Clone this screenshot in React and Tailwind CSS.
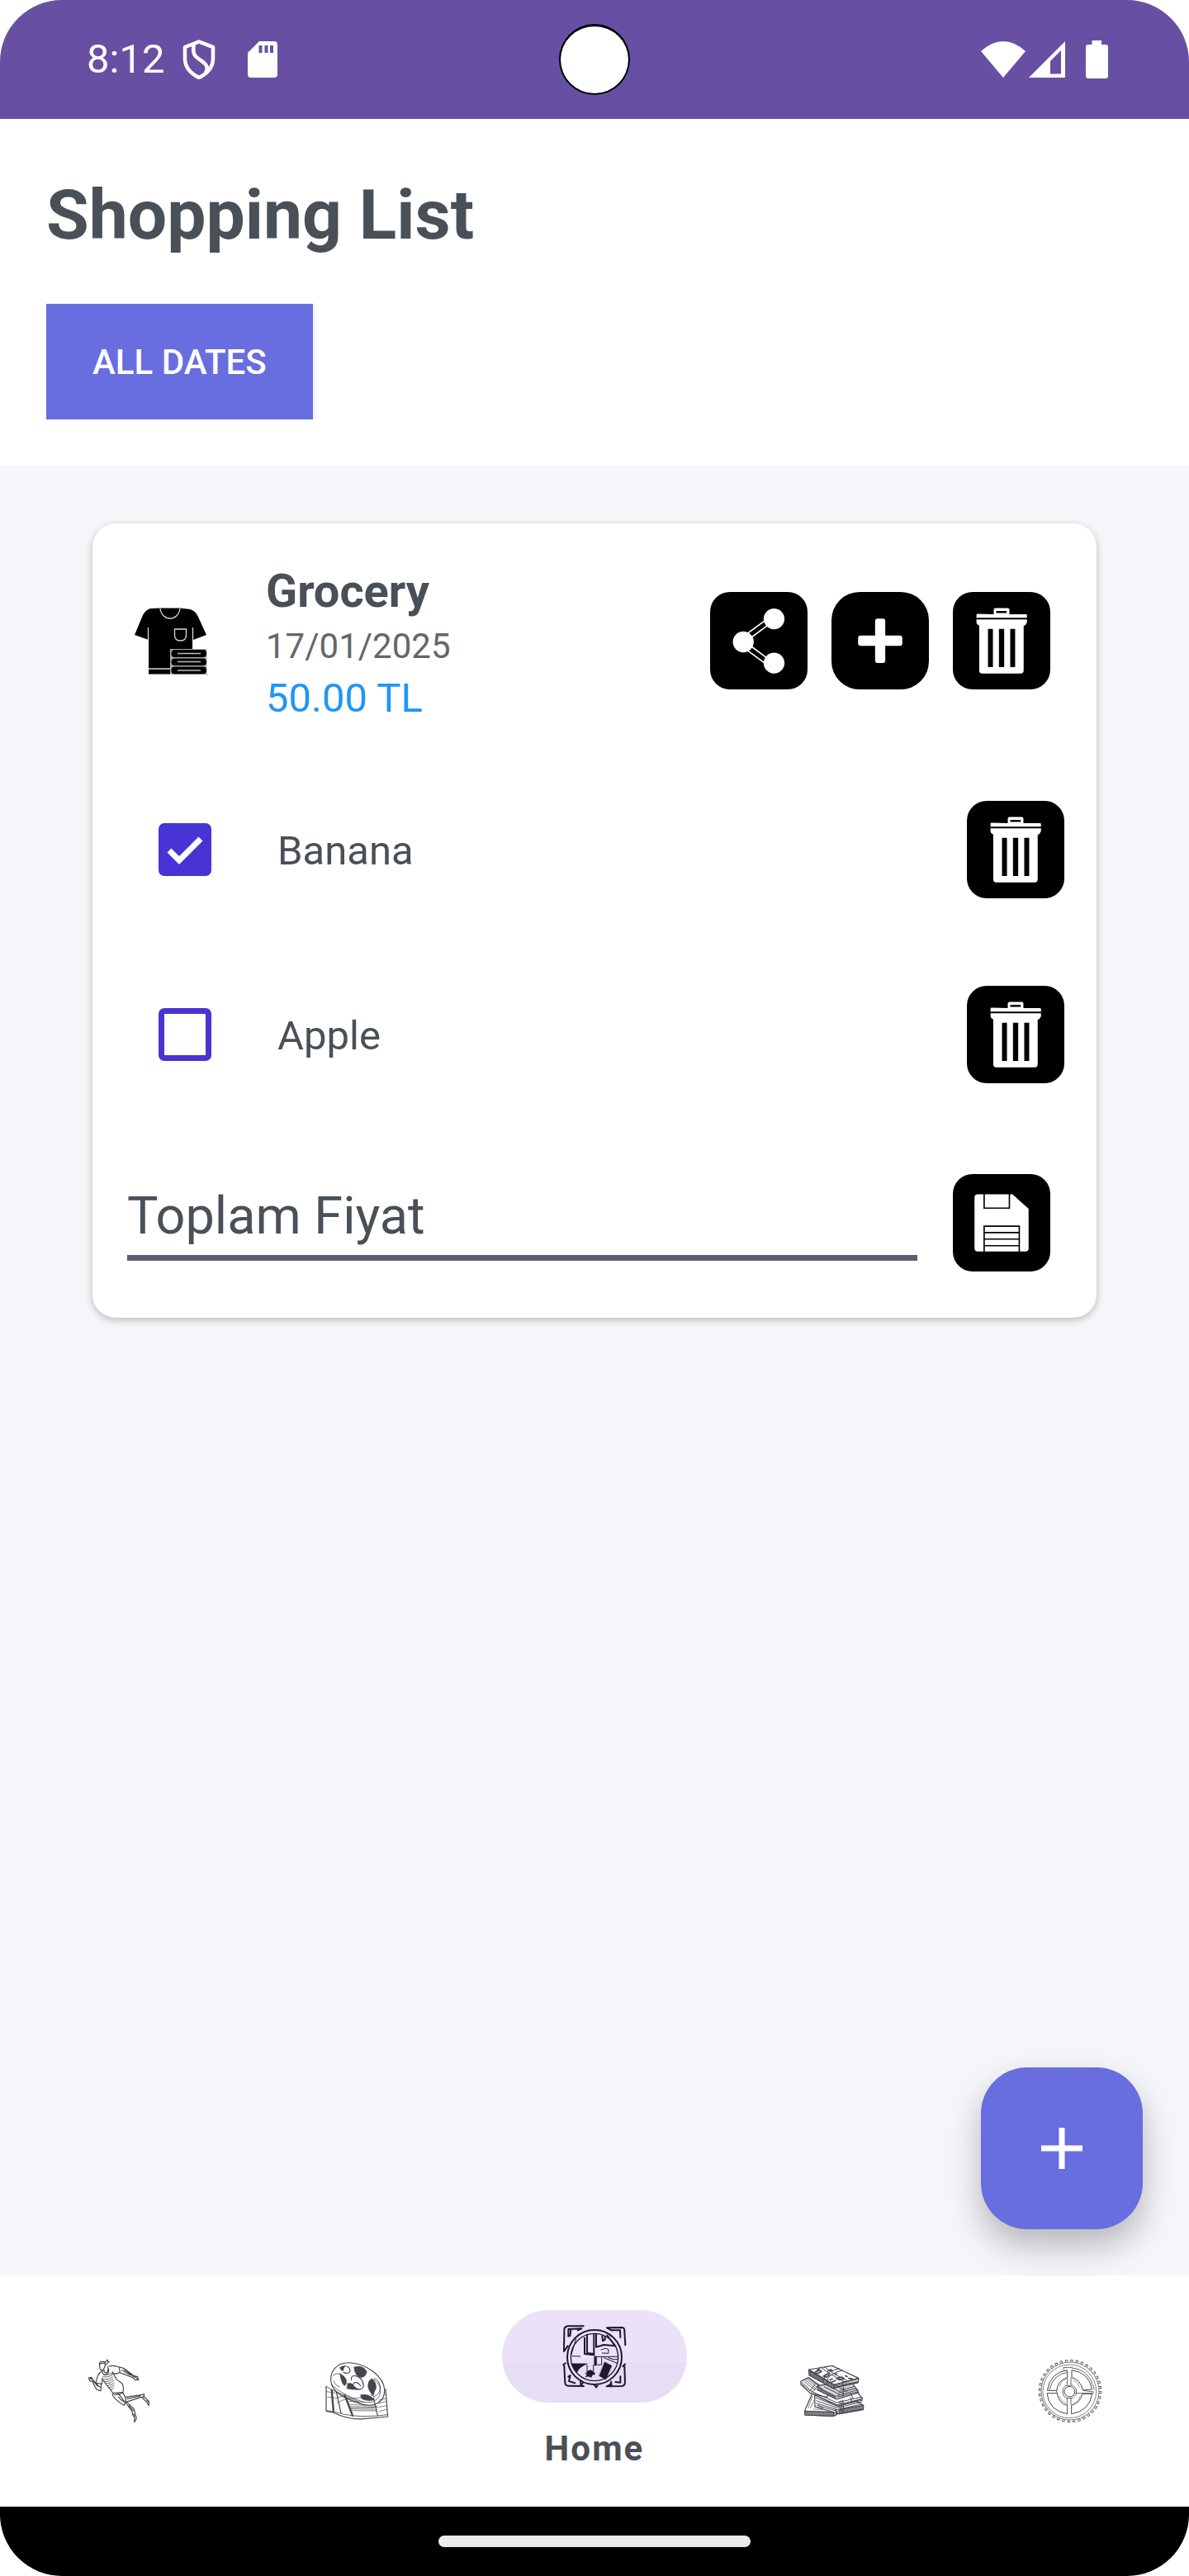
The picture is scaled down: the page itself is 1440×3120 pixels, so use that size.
import { useState } from "react";

function StatusBar() {
  return (
    <header className="relative flex h-36 items-center justify-between bg-[#6750a3] pl-[105px] pr-[98px] text-white">
      <div className="flex items-center">
        <span className="text-[49px] leading-[58px]">8:12</span>
        <svg className="ml-[22px] h-12 w-10" viewBox="0 0 40 48" fill="none" stroke="#fff" strokeWidth="4.5" strokeLinejoin="round">
          <path d="M20 2.5 37 9v14c0 10-7 18-17 23C10 41 3 33 3 23V9z" />
          <path d="M14 5c-4 18 7 17 14 25 3 4 2 7 0 10" />
        </svg>
        <svg className="ml-[39px] h-11 w-9" viewBox="0 0 36 44">
          <path fill="#fff" d="M14 0h18a4 4 0 0 1 4 4v36a4 4 0 0 1-4 4H4a4 4 0 0 1-4-4V14z" />
          <path fill="#6750a3" d="M13.500 5h4v9h-4zM20.500 5h4v9h-4zM27 5h4v9h-4z" />
        </svg>
      </div>
      <div className="absolute left-1/2 top-[29px] size-[86px] -translate-x-1/2 rounded-full border-x-2 border-b-2 border-t-[3px] border-black bg-white" />
      <div className="flex items-center">
        <svg className="h-11 w-[54px]" viewBox="0 0 54 44">
          <path fill="#fff" d="M0 12Q27-12 54 12L27 44z" />
        </svg>
        <svg className="ml-1 h-11 w-11" viewBox="0 0 44 44">
          <path fill="#fff" fillRule="evenodd" d="M44 0v44H0zM26 24v15.500h13V11z" />
        </svg>
        <svg className="ml-[25px] h-[46px] w-[27px]" viewBox="0 0 27 46">
          <path fill="#fff" d="M7.500 0h11.500v5h5a3 3 0 0 1 3 3v35a3 3 0 0 1-3 3H3a3 3 0 0 1-3-3V8a3 3 0 0 1 3-3h4.500z" />
        </svg>
      </div>
    </header>
  );
}

function IconButton({ label, viewBox, round, children }) {
  return (
    <button
      type="button"
      aria-label={label}
      className={`size-[118px] shrink-0 overflow-hidden bg-black ${round ? "rounded-[34px]" : "rounded-3xl"}`}
    >
      <svg className="size-full" viewBox={viewBox} fill="#fff">
        {children}
      </svg>
    </button>
  );
}

function TrashButton({ label }) {
  return (
    <IconButton label={label} viewBox="943 111 355 355">
      <path d="M1092 192v-16q0-6 6-6h45q6 0 6 6v16h60q4 0 4 4v26q-4 10-12 13v162q0 11-11 11h-140q-11 0-11-11V233q-10-3-10-12v-26q0-4 4-4z" />
      <g fill="#000">
        <path d="M1101 180h38v8h-38zM1028 205h186v6h-186zM1071 246h18v139h-18zM1111 246h19v139h-19zM1152 246h18v139h-18z" />
      </g>
    </IconButton>
  );
}

function ShirtIcon() {
  return (
    <svg className="size-[105px] shrink-0" viewBox="154 723 105 105" aria-hidden="true">
      <path d="M194 735.500h24l12.500 1.500q6 2 9 8l10.500 23-16 6v14h-20l-7 22h-27v-36l-17-6 10-24q3-6 9-8z" />
      <path d="M180 810h27v5.500h-27z" />
      <g fill="none" stroke="#d8d8d8" strokeWidth="1.300">
        <path d="M194 736c2 16 22 16 24 0M179.500 759v15M233.500 759v26M211.500 761h14v7q0 7-7 7t-7-7zM180 809h27" />
      </g>
      <path d="M206 785h46v32h-46z" fill="#aaa" />
      <g>
        <rect x="207.500" y="786" width="42.500" height="9" rx="4" />
        <rect x="207.500" y="796.500" width="42.500" height="8.500" rx="4" />
        <rect x="207.500" y="806.500" width="42.500" height="9" rx="4" />
      </g>
      <path d="M215 790.500h28M215 800.500h28M215 811h28" stroke="#bbb" strokeWidth="1.600" />
      <path d="M250.500 784v34h3v-34zM206 815.700h46v2h-46z" fill="#fff" />
    </svg>
  );
}

function ListItem({ id, name, initial }) {
  const [checked, setChecked] = useState(initial);
  return (
    <li className="flex items-center py-[53px] pl-20 pr-[39px]">
      <span className="relative size-16">
        <input
          id={id}
          type="checkbox"
          checked={checked}
          onChange={() => setChecked(!checked)}
          className="peer block size-16 appearance-none rounded-[7px] border-[7px] border-[#4834d4] bg-white checked:bg-[#4834d4]"
        />
        <svg
          className="pointer-events-none absolute inset-0 hidden size-16 peer-checked:block"
          viewBox="0 0 64 64"
          fill="none"
          stroke="#fff"
          strokeWidth="7"
        >
          <path d="M13 33 25 45 51 19" />
        </svg>
      </span>
      <label htmlFor={id} className="ml-20 flex-1 pt-1 text-[49px] leading-[58px] text-[#495057]">
        {name}
      </label>
      <TrashButton label={`Delete ${name}`} />
    </li>
  );
}

function ShoppingCard() {
  return (
    <article className="rounded-[28px] bg-white shadow-[0_3px_10px_rgba(0,0,0,0.24)]">
      <div className="flex items-center pb-[43px] pl-[42px] pr-14 pt-11">
        <ShirtIcon />
        <div className="ml-[63px] flex-1 pt-1.5">
          <h2 className="text-[56px] font-bold leading-[64px] text-[#495057]">Grocery</h2>
          <p className="text-[42px] leading-[70px] text-[#666666]">17/01/2025</p>
          <p className="text-[49px] leading-[56px] text-[#2196f3]">50.00 TL</p>
        </div>
        <div className="flex gap-[29px]">
          <IconButton label="Share list" viewBox="61 111 355 355">
            <path d="m177 277 92-68M189 293l92-68M189 293l92 68M177 309l92 68" fill="none" stroke="#fff" strokeWidth="5" />
            <circle cx="182" cy="293" r="38" />
            <circle cx="294" cy="209" r="38" />
            <circle cx="294" cy="370" r="38" />
          </IconButton>
          <IconButton label="Add item" viewBox="502 111 355 355" round>
            <rect x="661" y="208" width="37" height="162" rx="9" />
            <rect x="599" y="270" width="161" height="37" rx="9" />
          </IconButton>
          <TrashButton label="Delete list" />
        </div>
      </div>
      <ul>
        <ListItem id="item-banana" name="Banana" initial={true} />
        <ListItem id="item-apple" name="Apple" initial={false} />
      </ul>
      <form className="flex items-center gap-[43px] pb-14 pl-[42px] pr-14 pt-[57px]" onSubmit={(e) => e.preventDefault()}>
        <input
          type="text"
          aria-label="Toplam Fiyat"
          placeholder="Toplam Fiyat"
          className="h-[92px] min-w-0 flex-1 border-b-[7px] border-[#625b71] bg-transparent pb-2 text-[63px] text-[#495057] outline-none placeholder:text-[#495057]"
        />
        <IconButton label="Save price" viewBox="163 816 355 355">
          <path d="M254 890h126l59 52v145q0 11-11 11H253q-11 0-11-11V901q0-11 12-11z" />
          <path d="M277 888v52h92v-52M277 1100v-94h128v94M277 1029h128M277 1053h128M277 1077h128" fill="none" stroke="#000" strokeWidth="5" />
        </IconButton>
      </form>
    </article>
  );
}

function RunnerIcon() {
  return (
    <svg className="size-21" viewBox="66 102 252 252" fill="none" stroke="#49454f" strokeWidth="3.600" strokeLinejoin="round" strokeLinecap="round">
      <path d="M121 127q1-5 9-6l10 1q4 8 0 20l-5 9q-9 3-12-5zM121 130l19-4M140 127l10-13M141 136l15-14M150 114l2 8 5-1" />
      <path d="M133 152q-3 16 9 17 13 0 13-18l-4-10M138 150q0 12 7 12 7-1 6-12" />
      <path d="M155 138q20-5 38 3l3 19q-13 8-23 4l-6 2" />
      <path d="M194 142q10-1 18 5l35 26 13 3 3 12-13-1-6-7-32-13-15-5M212 150l34 26M204 152l30 18M250 177l12 8" />
      <path d="M130 155q-18 11-21 44l21 3 2-20M128 202l-2 25q-13-1-20-13l-10-20-10-4-4-10 10-2 7 11 18 20 10 6M98 190l16 20M86 180l8 6" />
      <path d="m131 184 40 52 36-4q4-18-3-31-15-11-22-17l-13-26" />
      <path d="M136 169q18 3 31-7M133 177q22 2 34-7M137 186q20 1 32-9M142 194q18 0 29-10M147 201q17 0 26-10M153 208q14-1 22-9M158 215q11-1 17-8M163 222q7-1 11-6" strokeWidth="2.500" />
      <path d="m171 236-2 7q14 22 42 37l4-10-26-34M176 241q20 0 30-7l10 17 1 17M190 249q8 12 22 19" />
      <path d="m217 250 57-8 9-3 1 10-13 2-54 17M222 256l48-10" />
      <path d="m281 247 20 18v15l-9-13-17-16M291 255l7 12" />
      <path d="m216 270 24 31 2 13M221 268l26 25 4 18M228 281l16 18M242 314l9-2 5 14q-4 12-8 15l1-17zM248 317v8" />
    </svg>
  );
}

function ReelIcon() {
  return (
    <svg className="size-21" viewBox="930 102 252 252" fill="none" stroke="#49454f" strokeWidth="3.500" strokeLinejoin="round" strokeLinecap="round">
      <path d="M966 208C951 160 982 119 1038 126c56 6 115 48 119 96 3 48-40 67-84 53-52-17-93-35-107-67z" />
      <path d="M968 206c9 18 70 48 108 60 38 11 66-8 66-40 0-28-8-40-22-44" strokeWidth="2.500" />
      <path d="M970 172c12-14 30-7 42 10M972 192c5 12 10 16 20 20" strokeWidth="2.500" />
      <g fill="#49454f" strokeWidth="1">
        <path d="M994 143q12-9 24-7-10 5-11 19-8-1-13-12zM1046 141q33-11 47 17-5 22-25 21-20-8-22-38zM995 164q17 7 24 24 2 16-8 21-13-13-16-45zM1023 200q14-4 23 9 6 8 21 13-26 3-47-3zM1110 184q-14 5-13 30 6 20 20 31 3-18 10-27 1-25-17-34zM1070 242q26-8 51 17-18 9-44-1-8-6-7-16z" />
      </g>
      <path d="M1020 138q14 6 12 19-5 10-24 3M1037 188q-4-18 16-15 25 7 28 35-3 19-28 12-17-8-7-21 12-7 24 10" />
      <path d="M1110 184q24 5 31 32 0 25-22 32l-12-8" strokeWidth="2.500" />
      <path d="M945 211v90l24 4q60 29 110 24l90-8-8-100" />
      <path d="m945 211 20 12 100 45M948 299q30 4 55 12 65 16 166 3" strokeWidth="2.500" />
      <path d="m965 222 7 82M1012 241l30 79" strokeWidth="7" strokeLinecap="butt" />
      <path d="m982 231 17 77M1117 253l15 64" />
      <path d="m947 230 32 5M950 250l25 2M977 255l35-11M985 270l40-17M1018 256l58-4M1020 266l62 2M1025 276l105 7M1030 284l103 3M1034 293l96 2M1036 299l90 1M1137 261l25-6M1134 273l28-7M1137 286l29-5M1137 302l30-8M1028 289h90" strokeWidth="2" />
    </svg>
  );
}

function HomeIcon() {
  return (
    <svg className="size-21" viewBox="354 216 252 252" fill="none" stroke="#1d192b" strokeWidth="6" strokeLinejoin="round" strokeLinecap="round">
      <circle cx="480" cy="345" r="99" strokeWidth="6" />
      <circle cx="480" cy="345" r="86" strokeWidth="4" />
      <path d="M440 232h-57q-14 2-13 17l-1 75 14-20M385 269v-26l48-2-14 6M394 245l-3 23" />
      <path d="M528 238l52-1q10 1 9 14l3 50M543 247h30l1 26M525 238l18 10" />
      <path d="M370 378l3 60q1 11 13 11l55 1M392 412l-5 20 22 7M370 378l-3-6 7-5M385 416l7-5" />
      <path d="M589 378l2 58q-1 13-12 14l-55 1M574 415v22l-18-2M591 370l-8 8M524 451l18-9" />
      <path d="M478 260v77M486 262v46l28-8 42 4M508 268l2 18 8-5v-12M526 266l26 34M444 275v58l35 4M453 264v66l25 3" />
      <path d="m400 341 28 1M395 338l18-60M504 318q20-9 27 0l-1 13-22-1M482 343h82M506 345v27l-14 1M514 347l49 20M530 347q20 10 35 6" strokeWidth="3" />
      <path d="M453 373v24l20-2M476 374v20" strokeWidth="3" />
      <path fill="#1d192b" strokeWidth="1" d="M396 368h58l-18 10q-14 8-21 23-12-10-19-33zM479 342h9v33h-9zM517 362l26 14-22 50-24-13z" />
      <path fill="#1d192b" strokeWidth="1" d="m452 397 15-6 4 6 8 2 3 9-9 1-5 10-9-4-12 2 5-9-6-5 8-2z" />
      <path d="M430 430v17l7-7M480 445l6 9 5-5M541 434l-4 11 8 5" />
    </svg>
  );
}

function MoneyIcon() {
  return (
    <svg className="size-21" viewBox="78 102 252 252" fill="none" stroke="#49454f" strokeWidth="3.600" strokeLinejoin="round">
      <path fill="#fff" d="m104 299 28-64 80 60-3 24-104-4z" />
      <path fill="#8d8a94" d="m104 301 104 3v15l-103-4z" />
      <path fill="#fff" d="m140 245 80-18 96 52v17l-88 15-87-26z" />
      <path fill="#8d8a94" d="m228 295 89-15v13l-88 18z" />
      <path fill="#fff" d="m132 226 90-16 76 26 16 20-90 27-82-40z" />
      <path fill="#fff" d="m90 192 28-13 76 55-10 17-60-15-34-32z" />
      <path fill="#d5d3da" d="m152 208 120-16 28 42-80 24-68-33z" />
      <path fill="#d5d3da" d="m119 150 12 24 85 30 84-22-2 15-88 20-89-52z" />
      <path fill="#fff" d="m119 150 85-14 95 45-88 24z" />
      <path fill="#8d8a94" d="m119 152 91 54v14l-90-49z" />
      <path d="m210 206 88-23M208 211l90-17M209 216l88-18M160 140q30 25 96 58M174 139q33 28 84 52M230 146q-48 10-58 40M242 152q-50 12-58 38M172 186v14M184 192v14" strokeWidth="3" />
      <path d="m142 159 14-7 9 4-12 8zM172 174l14-8 8 4-12 8zM186 155l12-5 8 6M220 182l17-5 10 6-18 4zM200 196l18-7M262 181l16 3M148 153l10-7M212 168l10-4M194 188l12-5M250 172l10 4" strokeWidth="5" />
      <path d="m92 196 44 37M94 203l36 30M97 190l46 36M104 186l48 40M110 183l52 42M116 181l56 44M122 228l22-28 12 3M130 234l22-27" strokeWidth="2.500" />
      <path d="m152 214 66 34M156 220l62 31M158 226l60 29M174 212l60 30M192 210l50 26M214 206l44 24M232 226l54-15M228 234l66-17M220 245l80-22M222 250l78-20M242 190l3 40-3 20" strokeWidth="3" />
      <path d="m135 232 85 38 93-21M136 240l86 38 93-22M142 251l80 32 93-22M146 263l76 26 90-22M145 272l78 24 88-21M148 280l76 22M230 265l5 42M242 260l4 44M236 262l5 43M270 235l10 20M270 250l6 20" strokeWidth="3" />
      <path d="m116 290 16-44M124 291l16-34M134 294l40 1M140 285l30 5M150 278l20 9M112 306v9M120 306v10M130 306v10M140 307v10M150 307v10M160 307v10M170 307v10M180 307v10M190 307v10M198 307v10M240 298v10M250 296v10M260 294v10M270 292v10M280 290v10M290 288v10M300 286v10M124 156v16M128 158v16M133 161v16M138 164v16M143 167v16M148 170v16M153 173v16M158 176v16M163 179v16M168 182v16M190 195v16M200 201v16" strokeWidth="2" />
      <path d="m215 294 8 16-11 8" strokeWidth="5" />
    </svg>
  );
}

function GearIcon() {
  return (
    <svg className="size-21" viewBox="942 102 252 252" fill="none" stroke="#49454f" strokeWidth="2.500">
      <circle cx="1068" cy="228" r="110" strokeWidth="9" strokeDasharray="9.600 9.600" />
      <circle cx="1068" cy="228" r="109" stroke="#fff" strokeWidth="6" strokeDasharray="5 14.020" strokeDashoffset="-2.300" />
      <circle cx="1068" cy="228" r="105" strokeWidth="2" />
      <circle cx="1066" cy="229" r="97" strokeWidth="2" />
      <path d="M1058 152q-62 8-73 74h34q5-38 39-47zM1074 152q62 8 74 70l-34 3q-8-38-40-46zM984 236q7 64 74 75v-31q-32-7-37-44zM1148 238q-9 62-75 73v-31q32-8 39-42z" strokeWidth="3" />
      <path d="M1058 160q-54 9-65 64M1074 144q65 6 82 80M1046 152l-2-10h32M1057 179v26M1071 179v26M1057 253v27M1071 253v27M1020 224v13M1088 236h66M1116 226l38 5" />
      <path d="M1030 212q6-22 22-27M1080 188q18 8 24 28M1028 246q8 20 24 26M1080 272q18-6 24-25" strokeWidth="1.500" />
      <path d="m1052 208 26-1 12 12v22l-13 13h-22l-13-12v-22z" />
      <circle cx="1066" cy="230" r="19" strokeWidth="3" />
    </svg>
  );
}

function NavLink({ label, children }) {
  return (
    <a href="#" aria-label={label} className="flex flex-1 items-center justify-center">
      {children}
    </a>
  );
}

export default function App() {
  return (
    <div className="bg-white font-['Roboto',sans-serif]">
      <div className="flex min-h-screen flex-col overflow-hidden rounded-[75px] bg-[#f5f6fa]">
        <StatusBar />
        <section className="bg-white px-14 pb-14 pt-[66px]">
          <h1 className="text-[84px] font-bold leading-[102px] text-[#495057]">Shopping List</h1>
          <button
            type="button"
            className="mt-14 h-35 bg-[#686de0] px-14 text-[42px] font-medium text-white shadow-[4px_0_4px_rgba(0,0,0,0.04)]"
          >
            ALL DATES
          </button>
        </section>
        <main className="relative flex-1 px-28 pt-[70px]">
          <ShoppingCard />
          <button
            type="button"
            aria-label="New list"
            className="absolute bottom-14 right-14 flex size-49 items-center justify-center rounded-[56px] bg-[#686de0] shadow-[0_20px_40px_rgba(0,0,0,0.26)]"
          >
            <svg className="size-[50px]" viewBox="0 0 50 50" fill="#fff">
              <path d="M21.500 0h7v21.500H50v7H28.500V50h-7V28.500H0v-7h21.500z" />
            </svg>
          </button>
        </main>
        <nav className="relative flex h-70 bg-white">
          <NavLink label="Sports"><RunnerIcon /></NavLink>
          <NavLink label="Movies"><ReelIcon /></NavLink>
          <a href="#" aria-current="page" className="flex flex-1 flex-col items-center pt-[42px] text-[#495057]">
            <span className="flex h-28 w-56 items-center justify-center rounded-full bg-linear-to-b from-[#ebe1f8] from-56% to-[#e7def6] to-56%">
              <HomeIcon />
            </span>
            <span className="mt-[31px] text-[42px] font-bold leading-[50px] tracking-wider">Home</span>
          </a>
          <NavLink label="Money"><MoneyIcon /></NavLink>
          <NavLink label="Settings"><GearIcon /></NavLink>
        </nav>
        <footer className="flex h-21 items-center justify-center bg-black">
          <div className="h-3.5 w-[378px] rounded-full bg-[#ebebeb]" />
        </footer>
      </div>
    </div>
  );
}
